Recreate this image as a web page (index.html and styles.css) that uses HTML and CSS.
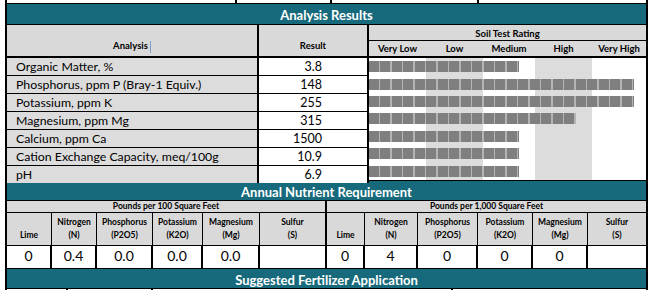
FILE: index.html
```html
<!DOCTYPE html>
<html>
<head>
<meta charset="utf-8">
<link rel="stylesheet" href="styles.css">
</head>
<body>
<div class="sheet">
  <div class="stub stub-top"><div></div><div></div><div></div><div></div></div>
  <div class="band band-first">Analysis Results</div>
  <div class="analysis">
    <div class="ah ah-name"><span>Analysis</span><span class="caret"></span></div>
    <div class="ah ah-result">Result</div>
    <div class="ah ah-rating">
      <div class="rating-title">Soil Test Rating</div>
      <div class="levels"><span>Very Low</span><span>Low</span><span>Medium</span><span>High</span><span>Very High</span></div>
    </div>
    <div class="rows">
      <div class="row"><div class="name">Organic Matter, %</div><div class="val">3.8</div></div>
      <div class="row"><div class="name">Phosphorus, ppm P (Bray-1 Equiv.)</div><div class="val">148</div></div>
      <div class="row"><div class="name">Potassium, ppm K</div><div class="val">255</div></div>
      <div class="row"><div class="name">Magnesium, ppm Mg</div><div class="val">315</div></div>
      <div class="row"><div class="name">Calcium, ppm Ca</div><div class="val">1500</div></div>
      <div class="row"><div class="name">Cation Exchange Capacity, meq/100g</div><div class="val">10.9</div></div>
      <div class="row"><div class="name">pH</div><div class="val">6.9</div></div>
    </div>
    <div class="chart">
      <div class="bar-row"><div class="bar" style="width:149.5px"></div></div>
      <div class="bar-row"><div class="bar" style="width:264.5px"></div></div>
      <div class="bar-row"><div class="bar" style="width:264.5px"></div></div>
      <div class="bar-row"><div class="bar" style="width:207px"></div></div>
      <div class="bar-row"><div class="bar" style="width:149.5px"></div></div>
      <div class="bar-row"><div class="bar" style="width:149.5px"></div></div>
      <div class="bar-row"><div class="bar" style="width:149.5px"></div></div>
    </div>
  </div>
  <div class="band">Annual Nutrient Requirement</div>
  <div class="nutrients">
    <div class="pounds half-left">Pounds per 100 Square Feet</div>
    <div class="pounds">Pounds per 1,000 Square Feet</div>

    <div class="nh">Lime</div>
    <div class="nh">Nitrogen<br>(N)</div>
    <div class="nh">Phosphorus<br>(P2O5)</div>
    <div class="nh">Potassium<br>(K2O)</div>
    <div class="nh">Magnesium<br>(Mg)</div>
    <div class="nh half-left">Sulfur<br>(S)</div>
    <div class="nh">Lime</div>
    <div class="nh">Nitrogen<br>(N)</div>
    <div class="nh">Phosphorus<br>(P2O5)</div>
    <div class="nh">Potassium<br>(K2O)</div>
    <div class="nh">Magnesium<br>(Mg)</div>
    <div class="nh last">Sulfur<br>(S)</div>

    <div class="nv">0</div>
    <div class="nv">0.4</div>
    <div class="nv">0.0</div>
    <div class="nv">0.0</div>
    <div class="nv">0.0</div>
    <div class="nv half-left"></div>
    <div class="nv">0</div>
    <div class="nv">4</div>
    <div class="nv">0</div>
    <div class="nv">0</div>
    <div class="nv">0</div>
    <div class="nv last"></div>
  </div>
  <div class="band">Suggested Fertilizer Application</div>
  <div class="stub stub-bottom"><div></div><div></div><div></div><div></div></div>
</div>
</body>
</html>
```
FILE: styles.css
```css
* { box-sizing: border-box; margin: 0; padding: 0; }
html, body { background: #fff; }
body {
  margin: 0;
  font-family: Lato, "Liberation Sans", Arial, sans-serif;
  color: #000;
}
.sheet {
  margin-left: 5px;
  width: 643px;
  border-left: 2px solid #000;
  border-right: 2px solid #000;
}

/* stub rows (partial rows above and below) */
.stub { display: grid; }
.stub div { border-right: 2px solid #000; }
.stub div:last-child { border-right: 0; }
.stub-top { height: 3px; grid-template-columns: 230px 95px 147px 1fr; }
.stub-bottom { height: 2px; grid-template-columns: 61px 85px 300px 1fr; }

/* teal title bands */
.band {
  height: 21px;
  background: #176a7b;
  color: #fff;
  font-weight: bold;
  font-size: 13px;
  line-height: 20px;
  padding-top: 1px;
  text-align: center;
  border-top: 1px solid #000;
  border-bottom: 1px solid #000;
}
.band-first { height: 22px; line-height: 20px; }

/* analysis table */
.analysis {
  display: grid;
  grid-template-columns: 252px 110px 277px;
  grid-template-rows: 33px 122px;
}
.ah {
  background: #d9d9d9;
  font-weight: bold;
  font-size: 9.5px;
  border-bottom: 2px solid #000;
}
.ah-name, .ah-result {
  border-right: 2px solid #000;
  display: flex;
  align-items: flex-end;
  justify-content: center;
  padding-bottom: 5px;
}
.caret {
  display: inline-block;
  width: 1px;
  height: 12px;
  margin-left: 2px;
  margin-bottom: -2px;
  background: #7d9cc9;
}
.ah-rating { display: flex; flex-direction: column; }
.rating-title {
  height: 16px;
  line-height: 17px;
  text-align: center;
  border-bottom: 1px solid #000;
}
.levels {
  flex: 1;
  display: grid;
  grid-template-columns: 57px 57px 52px 57px 54px;
  align-items: center;
  text-align: center;
}

.rows {
  grid-column: 1 / 3;
  display: grid;
  grid-template-rows: repeat(7, 1fr);
}
.row {
  display: grid;
  grid-template-columns: 252px 110px;
  border-bottom: 1px solid #000;
}
.row:last-child { border-bottom: 0; }
.name {
  background: #dcdcdc;
  border-right: 2px solid #000;
  font-size: 12.3px;
  line-height: 17px;
  padding-left: 9px;
}
.val {
  background: #fff;
  border-right: 2px solid #000;
  font-size: 12.5px;
  line-height: 17px;
  text-align: right;
  padding-right: 45px;
}

.chart {
  display: grid;
  grid-template-rows: repeat(7, 1fr);
  background: linear-gradient(to right,
    #fff 0 57px, #dcdcdc 57px 114px, #fff 114px 166px,
    #dcdcdc 166px 223px, #fff 223px);
}
.bar-row { display: flex; align-items: center; }
.bar {
  height: 11px;
  background: repeating-linear-gradient(to right, #7f7f7f 0 10px, #b4b4b4 10px 11.5px);
}

/* nutrient table */
.nutrients {
  display: grid;
  grid-template-columns: 45px 45px 56px 50px 57px 67px 38px 53px 60px 55px 55px 58px;
  grid-template-rows: 12px 33px 22px;
}
.pounds {
  grid-column: span 6;
  background: #d9d9d9;
  font-weight: bold;
  font-size: 8.5px;
  line-height: 11px;
  text-align: center;
  border-bottom: 1px solid #000;
}
.nh {
  background: #d9d9d9;
  font-weight: bold;
  font-size: 8.5px;
  line-height: 13px;
  text-align: center;
  display: flex;
  flex-direction: column;
  justify-content: flex-end;
  padding-bottom: 3px;
  border-right: 1px solid #000;
  border-bottom: 1px solid #000;
}
.nv {
  background: #fff;
  font-size: 14px;
  line-height: 20px;
  text-align: center;
  border-right: 2px solid #000;
}
.half-left { border-right: 2px solid #000; }
.last { border-right: 0; }
```
